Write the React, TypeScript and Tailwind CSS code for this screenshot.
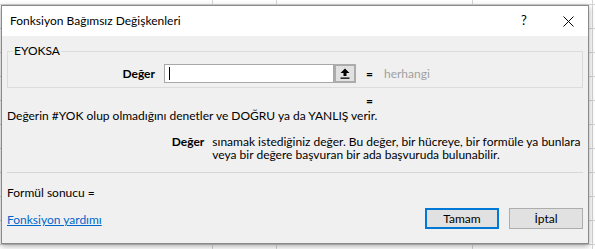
const font = { fontFamily: 'Lato, "Open Sans", sans-serif' };

const UpArrow = () => (
  <svg width="10" height="11" viewBox="0 0 10 11" className="block">
    <path d="M5 0.5 L9.5 5 L6.5 5 L6.5 8 L3.5 8 L3.5 5 L0.5 5 Z" fill="#000" />
    <rect x="0.5" y="9.5" width="9" height="1.3" fill="#000" />
  </svg>
);

const CloseIcon = () => (
  <svg width="11" height="11" viewBox="0 0 11 11" className="block">
    <path d="M0.5 0.5 L10.5 10.5 M10.5 0.5 L0.5 10.5" stroke="#000" strokeWidth="1" />
  </svg>
);

export default function App() {
  return (
    <div
      className="relative w-[595px] h-[249px] overflow-hidden bg-white text-[12px] text-black antialiased"
      style={font}
    >
      {/* spreadsheet behind the dialog */}
      <div className="absolute inset-0 bg-[repeating-linear-gradient(to_bottom,transparent_0px,transparent_4px,#d4d4d4_4px,#d4d4d4_5px,transparent_5px,transparent_24px)]" />
      <div className="absolute top-0 bottom-0 left-[212px] w-px bg-[#d4d4d4]" />
      <div className="absolute top-0 bottom-0 left-[276px] w-px bg-[#d4d4d4]" />
      <div className="absolute top-0 bottom-0 left-[472px] w-px bg-[#d4d4d4]" />
      <div className="absolute top-0 bottom-0 left-[592px] w-px bg-[#d4d4d4]" />

      {/* dialog window */}
      <div className="absolute left-[1px] top-[5px] w-[588px] h-[239px] flex flex-col border border-[#8a8a8a] bg-[#f0f0f0] shadow-[0_2px_6px_rgba(0,0,0,0.35)]">
        <div className="h-[30px] shrink-0 bg-white flex items-center pl-[8px] pr-[14px]">
          <span className="flex-1 text-[12px]">Fonksiyon Bağımsız Değişkenleri</span>
          <span className="w-[10px] text-[13px] mr-[34px] text-center">?</span>
          <CloseIcon />
        </div>

        <div className="flex-1 flex flex-col px-[5px]">
          <div className="relative mt-[15px] h-[37px] border border-[#dcdcdc] flex items-start pt-[12px]">
            <span className="absolute -top-[8px] left-[5px] px-px bg-[#f0f0f0] leading-[14px]">EYOKSA</span>
            <span className="w-[147px] text-right font-bold leading-[19px]">Değer</span>
            <div className="ml-[9px] flex h-[19px]">
              <div className="w-[170px] h-[19px] border border-[#a8a8a8] bg-white flex items-center pl-[4px]">
                <div className="w-px h-[13px] bg-black" />
              </div>
              <div className="w-[22px] h-[19px] border-2 border-[#acacac] bg-[#e1e1e1] flex items-center justify-center">
                <UpArrow />
              </div>
            </div>
            <span className="ml-[10px] leading-[19px] font-bold">=</span>
            <span className="ml-[11px] leading-[19px] text-[#a0a0a0]">herhangi</span>
          </div>

          <div className="mt-[7px] h-[12px] leading-[12px] pl-[359px] font-bold">=</div>

          <p className="mt-[2px] leading-[14px]">
            Değerin #YOK olup olmadığını denetler ve DOĞRU ya da YANLIŞ verir.
          </p>

          <div className="mt-[12px] flex">
            <span className="w-[198px] text-right font-bold leading-[13px]">Değer</span>
            <p className="ml-[8px] w-[372px] leading-[13px]">
              sınamak istediğiniz değer. Bu değer, bir hücreye, bir formüle ya bunlara veya bir
              değere başvuran bir ada başvuruda bulunabilir.
            </p>
          </div>

          <div className="mt-[11px] h-px bg-[#d6d6d6]" />

          <div className="mt-[13px] leading-[14px]">Formül sonucu =</div>

          <div className="mt-[8px] flex items-center">
            <a href="#" className="flex-1 text-[#0066cc] underline leading-[14px] mt-[3px]">
              Fonksiyon yardımı
            </a>
            <button className="w-[74px] h-[21px] border-2 border-[#0078d7] bg-[#e1e1e1] leading-none">
              Tamam
            </button>
            <button className="ml-[10px] w-[74px] h-[21px] border border-[#adadad] bg-[#e1e1e1] leading-none">
              İptal
            </button>
          </div>
        </div>
      </div>
    </div>
  );
}
